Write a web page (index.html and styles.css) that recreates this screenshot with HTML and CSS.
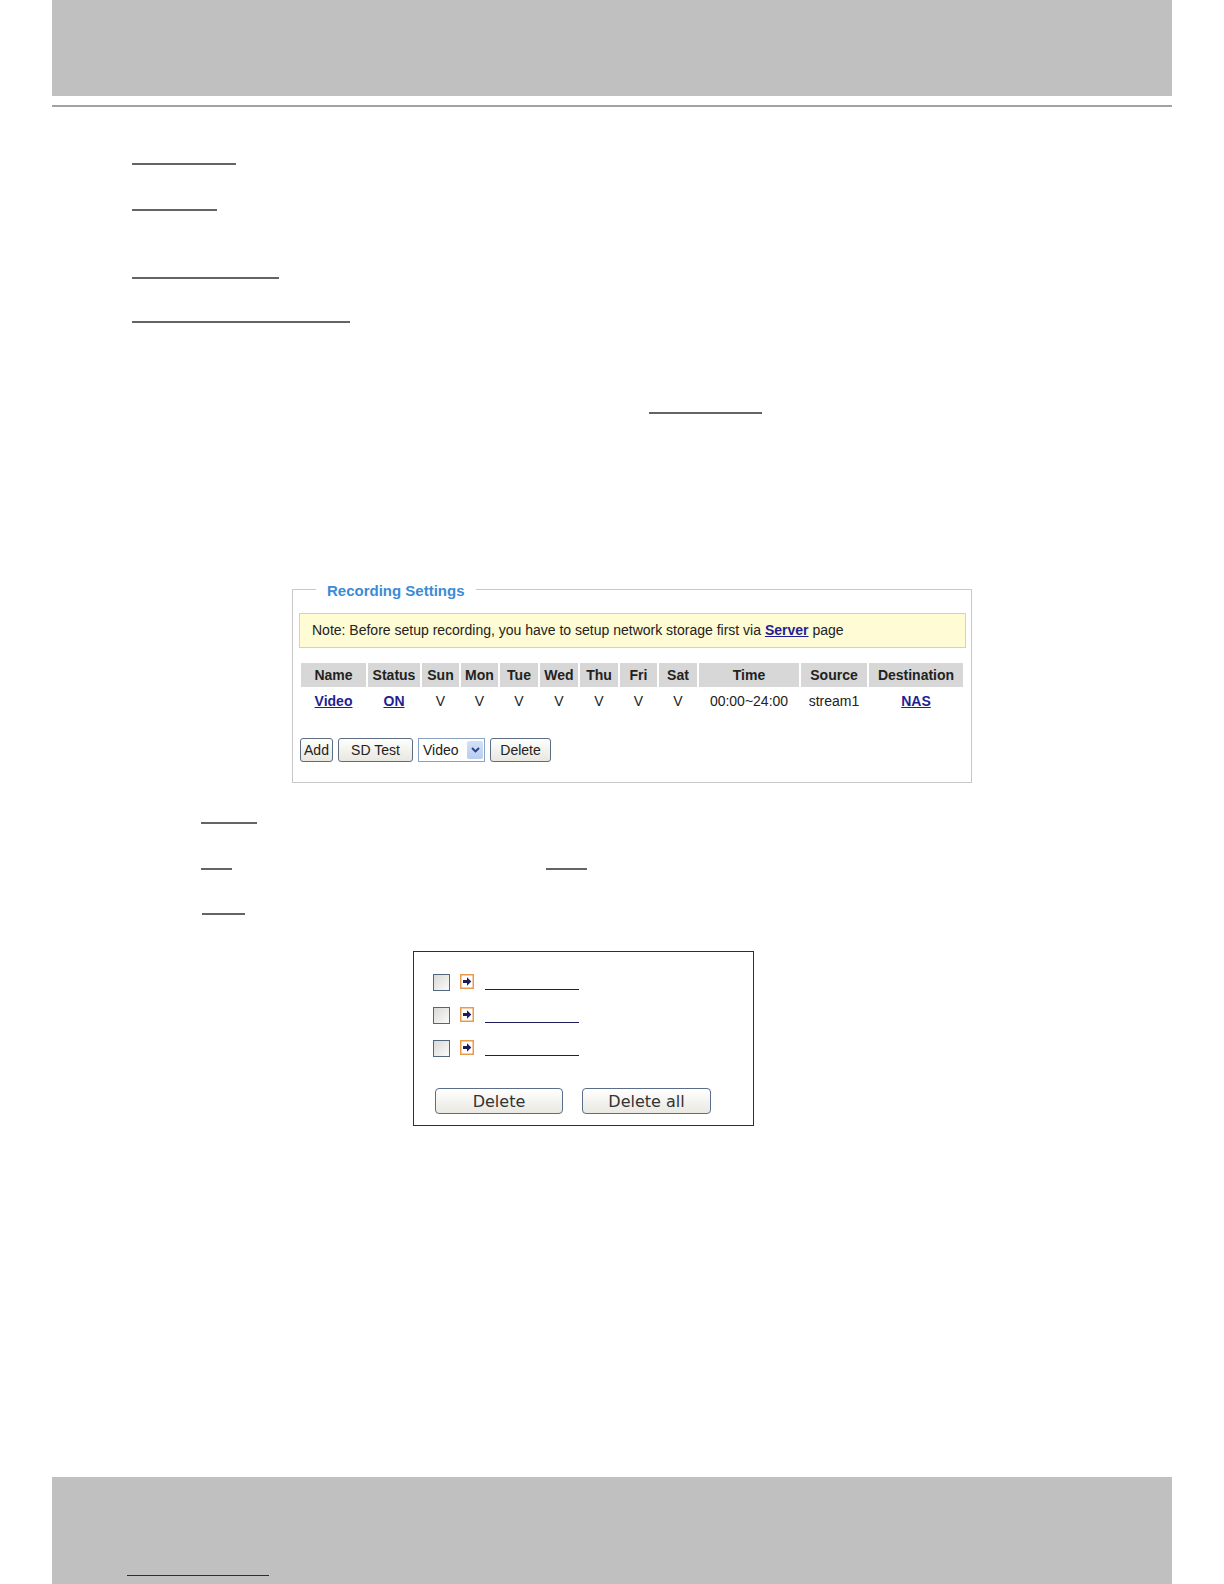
FILE: index.html
```html
<!DOCTYPE html>
<html lang="en">
<head>
<meta charset="utf-8">
<title>Recording Settings</title>
<link rel="stylesheet" href="styles.css">
</head>
<body>
<div class="top-band"></div>
<div class="top-rule"></div>

<div class="doc">
  <span class="mark m1"></span>
  <span class="mark m2"></span>
  <span class="mark m3"></span>
  <span class="mark m4"></span>
  <span class="mark m5"></span>

  <fieldset class="rec">
    <legend class="rec-legend">Recording Settings</legend>
    <div class="note">Note: Before setup recording, you have to setup network storage first via <a class="lnk" href="#">Server</a> page</div>
    <table class="rec-table">
      <colgroup>
        <col class="c65"><col class="c52"><col class="c37"><col class="c37"><col class="c38"><col class="c38"><col class="c38"><col class="c37"><col class="c38"><col class="c100"><col class="c66"><col class="c94">
      </colgroup>
      <thead>
        <tr><th>Name</th><th>Status</th><th>Sun</th><th>Mon</th><th>Tue</th><th>Wed</th><th>Thu</th><th>Fri</th><th>Sat</th><th>Time</th><th>Source</th><th>Destination</th></tr>
      </thead>
      <tbody>
        <tr><td><a class="lnk" href="#">Video</a></td><td><a class="lnk" href="#">ON</a></td><td>V</td><td>V</td><td>V</td><td>V</td><td>V</td><td>V</td><td>V</td><td>00:00~24:00</td><td>stream1</td><td><a class="lnk" href="#">NAS</a></td></tr>
      </tbody>
    </table>
    <div class="btn-row">
      <button class="btn w33">Add</button>
      <button class="btn w75">SD Test</button>
      <div class="sel"><span class="sel-text">Video</span><span class="sel-arrow"><svg width="9" height="6" viewBox="0 0 9 6"><path d="M1 1l3.5 3.5L8 1" fill="none" stroke="#2b3f8a" stroke-width="1.8"/></svg></span></div>
      <button class="btn w61">Delete</button>
    </div>
  </fieldset>

  <span class="mark ma"></span>
  <div class="mark-row">
    <span class="mark mb1"></span>
    <span class="mark mb2"></span>
  </div>
  <span class="mark mc"></span>

  <div class="files">
    <div class="file-row"><span class="chk"></span><svg class="go" width="14" height="15" viewBox="0 0 14 15"><rect x="0.75" y="0.75" width="12.5" height="13.5" fill="#fff" stroke="#e99a4c" stroke-width="1.5"/><path d="M3 6h4V3.2l4.3 4.3L7 11.8V9H3z" fill="#1c1c5c"/></svg><span class="file-link"></span></div>
    <div class="file-row"><span class="chk"></span><svg class="go" width="14" height="15" viewBox="0 0 14 15"><rect x="0.75" y="0.75" width="12.5" height="13.5" fill="#fff" stroke="#e99a4c" stroke-width="1.5"/><path d="M3 6h4V3.2l4.3 4.3L7 11.8V9H3z" fill="#1c1c5c"/></svg><span class="file-link"></span></div>
    <div class="file-row"><span class="chk"></span><svg class="go" width="14" height="15" viewBox="0 0 14 15"><rect x="0.75" y="0.75" width="12.5" height="13.5" fill="#fff" stroke="#e99a4c" stroke-width="1.5"/><path d="M3 6h4V3.2l4.3 4.3L7 11.8V9H3z" fill="#1c1c5c"/></svg><span class="file-link"></span></div>
    <div class="file-btns">
      <button class="btn2 w128">Delete</button>
      <button class="btn2 w129">Delete all</button>
    </div>
  </div>
</div>

<div class="bottom-band">
  <span class="foot-link"></span>
</div>
</body>
</html>
```

FILE: styles.css
```css
html, body {
  margin: 0;
  padding: 0;
  background: #ffffff;
}
body {
  font-family: "Liberation Sans", Arial, sans-serif;
  color: #222;
  overflow: hidden;
  height: 1584px;
}

.top-band {
  margin: 0 52px;
  height: 96px;
  background: #c0c0c0;
}
.top-rule {
  margin: 9px 52px 0;
  height: 2px;
  background: #a2a2a2;
}

.doc {
  display: block;
}

.mark {
  display: block;
  height: 2px;
  background: #646464;
}
.m1 { width: 104px; margin: 56px 0 0 132px; }
.m2 { width: 85px;  margin: 44px 0 0 132px; }
.m3 { width: 147px; margin: 66px 0 0 132px; }
.m4 { width: 218px; margin: 42px 0 0 132px; }
.m5 { width: 113px; margin: 89px 0 0 649px; }

/* Recording settings fieldset */
.rec {
  box-sizing: border-box;
  width: 680px;
  min-width: 0;
  margin: 166px 0 0 292px;
  padding: 0 5px 20px 6px;
  border: 1px solid #c9c9c9;
}
.rec-legend {
  margin-left: 17px;
  padding: 2px 11px 0;
  font-size: 15px;
  font-weight: bold;
  line-height: 17px;
  color: #3b8bd6;
}

.note {
  box-sizing: border-box;
  margin-top: 14px;
  height: 35px;
  border: 1px solid #e6d57c;
  background: #fffbd4;
  padding-left: 12px;
  font-size: 14px;
  line-height: 33px;
  color: #222;
}

.lnk {
  color: #1f1f95;
  font-weight: bold;
  text-decoration: underline;
}

.rec-table {
  margin-top: 13px;
  table-layout: fixed;
  width: 666px;
  border-collapse: separate;
  border-spacing: 2px;
  font-size: 14px;
}
.c65 { width: 65px; }
.c52 { width: 52px; }
.c37 { width: 37px; }
.c38 { width: 38px; }
.c100 { width: 100px; }
.c66 { width: 66px; }
.c94 { width: 94px; }

.rec-table th {
  height: 24px;
  padding: 0;
  background: #d7d7d7;
  font-weight: bold;
  color: #222;
  text-align: center;
  white-space: nowrap;
  overflow: hidden;
}
.rec-table td {
  height: 24px;
  padding: 0;
  text-align: center;
  color: #222;
  white-space: nowrap;
}

.btn-row {
  display: flex;
  gap: 5px;
  margin: 23px 0 0 1px;
}
.btn {
  box-sizing: border-box;
  height: 24px;
  padding: 0;
  border: 1px solid #5c6c84;
  border-radius: 3px;
  background: linear-gradient(#fefefc, #e8e7e0);
  font-family: "Liberation Sans", Arial, sans-serif;
  font-size: 14px;
  color: #222;
}
.w33 { width: 33px; }
.w75 { width: 75px; }
.w61 { width: 61px; }

.sel {
  box-sizing: border-box;
  width: 67px;
  height: 24px;
  border: 1px solid #8aa3c0;
  background: #fff;
  display: flex;
  align-items: center;
  justify-content: space-between;
  padding: 0 1px 0 4px;
  font-size: 14px;
}
.sel-arrow {
  width: 16px;
  height: 18px;
  border-radius: 2px;
  background: linear-gradient(#d3e1f8, #b7cdf1);
  display: flex;
  align-items: center;
  justify-content: center;
}

/* marks below fieldset */
.ma { width: 56px; margin: 39px 0 0 201px; }
.mark-row {
  display: flex;
  margin: 44px 0 0 201px;
}
.mb1 { width: 31px; }
.mb2 { width: 41px; margin-left: 314px; }
.mc { width: 43px; margin: 43px 0 0 202px; }

/* file list box */
.files {
  box-sizing: border-box;
  width: 341px;
  height: 175px;
  margin: 36px 0 0 413px;
  border: 1px solid #1f2a6c;
  padding: 22px 0 0 19px;
}
.file-row {
  display: flex;
  align-items: flex-start;
  height: 17px;
  margin-bottom: 16px;
}
.chk {
  box-sizing: border-box;
  width: 17px;
  height: 17px;
  border: 1px solid #52667f;
  background: linear-gradient(135deg, #d9d9d5, #fbfbfb);
}
.go {
  display: block;
  margin-left: 10px;
}
.file-link {
  display: block;
  width: 94px;
  height: 1px;
  margin: 15px 0 0 11px;
  background: #1c1c5c;
}
.file-btns {
  display: flex;
  gap: 19px;
  margin: 31px 0 0 2px;
}
.btn2 {
  box-sizing: border-box;
  height: 26px;
  padding: 0;
  border: 1px solid #5a6d8a;
  border-radius: 4px;
  background: linear-gradient(#ffffff, #e9e8e1);
  font-family: "DejaVu Sans", Verdana, sans-serif;
  font-size: 16px;
  color: #333;
}
.w128 { width: 128px; }
.w129 { width: 129px; }

.bottom-band {
  box-sizing: border-box;
  margin: 351px 52px 0;
  height: 107px;
  background: #c0c0c0;
  padding: 98px 0 0 75px;
}
.foot-link {
  display: block;
  width: 142px;
  height: 1px;
  background: #1414f0;
}
```
